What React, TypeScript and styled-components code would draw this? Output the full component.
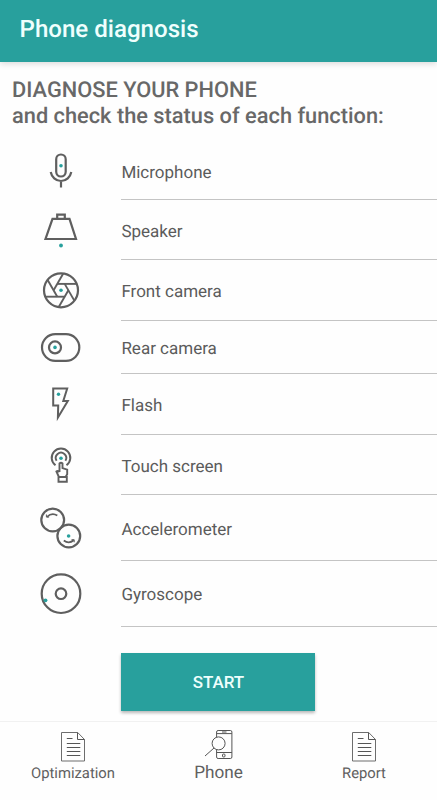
import React from "react";
import styled, { createGlobalStyle } from "styled-components";

const GlobalStyle = createGlobalStyle`
  * { box-sizing: border-box; }
  body {
    margin: 0;
    background: #fff;
    font-family: Roboto, sans-serif;
    text-rendering: geometricPrecision;
  }
`;

const TEAL = "#28a09d";
const INK = "#5f5f5f";

const Screen = styled.div`
  display: flex;
  flex-direction: column;
  width: 437px;
  height: 800px;
  overflow: hidden;
  background: #fefefe;
`;

const AppBar = styled.header`
  flex: none;
  height: 62px;
  padding: 15px 19.5px 0;
  background: ${TEAL};
  color: #effffd;
  box-shadow: 0 2px 6px rgba(0, 0, 0, 0.14);
  font-size: 24.1px;
  font-weight: 500;
  line-height: 28px;
  white-space: nowrap;
`;

const Heading = styled.h1`
  flex: none;
  height: 78px;
  margin: 0;
  padding: 16px 12px 0;
  color: #686868;
  font-size: 21.8px;
  font-weight: 500;
  line-height: 26px;
  white-space: nowrap;
`;

const HeadingLine = styled.span`
  display: block;
`;

const TestList = styled.ul`
  flex: none;
  margin: 0;
  padding: 0;
  list-style: none;
`;

const TestRow = styled.li<{ $height: number }>`
  display: flex;
  height: ${(p) => p.$height}px;
`;

const IconCell = styled.div`
  flex: none;
  width: 121px;
  padding-left: 30px;
`;

const TestIcon = styled.svg`
  display: block;
  fill: none;
  stroke: ${INK};
  stroke-width: 2.2;
  overflow: visible;
`;

const Dot = styled.circle`
  fill: ${TEAL};
  stroke: none;
`;

const TestLabel = styled.div<{ $top: number }>`
  flex: 1;
  padding: ${(p) => p.$top}px 0 0 0.4px;
  border-bottom: 1px solid #c4c4c4;
  color: #5b5b5b;
  font-size: 17px;
  line-height: 20px;
`;

const StartButton = styled.button`
  flex: none;
  width: 194px;
  height: 58px;
  margin: 26px 0 0 121.4px;
  padding: 0;
  border: 0;
  background: ${TEAL};
  box-shadow: 0 2px 3px rgba(0, 0, 0, 0.28);
  color: #effffd;
  font: 500 17px/58px Roboto, sans-serif;
  letter-spacing: -0.1px;
`;

const TabBar = styled.nav`
  display: grid;
  flex: none;
  grid-template-columns: 146px 145px 146px;
  height: 79px;
  margin-top: auto;
  border-top: 1px solid #f1f1f1;
`;

const Tab = styled.a`
  display: flex;
  flex-direction: column;
  align-items: center;
  color: #606060;
`;

const TabIcon = styled.svg`
  display: block;
  height: 41px;
  fill: none;
  stroke: #555;
  stroke-width: 1;
`;

const TabLabel = styled.span<{ $active?: boolean }>`
  font-size: ${(p) => (p.$active ? 17.2 : 14.8)}px;
  line-height: 20px;
`;

const Microphone = () => (
  <>
    <rect x="26.2" y="9.5" width="9.5" height="22" rx="4.75" />
    <path d="M20.7 27c1 5 5 9 10.3 9s9.300-4 10.300-9M31 36v6.500" />
    <Dot cx="31" cy="20.700" r="1.800" />
  </>
);

const Speaker = () => (
  <>
    <path d="M22.500 13.800h17L46 34H15.500z" />
    <path d="M27.200 13.800V9.700h7.600v4.100" />
    <Dot cx="31" cy="40.500" r="1.900" />
  </>
);

const Aperture = () => (
  <>
    <circle cx="31" cy="25.300" r="17" />
    {[0, 60, 120, 180, 240, 300].map((angle) => (
      <path
        key={angle}
        d="M27.3 18.900H46.600"
        transform={`rotate(${angle} 31 25.300)`}
        strokeWidth="1.900"
      />
    ))}
    <Dot cx="31" cy="25.300" r="1.800" />
  </>
);

const CameraLens = () => (
  <>
    <rect x="12" y="9.200" width="37.300" height="26.600" rx="13.300" />
    <circle cx="25" cy="22.400" r="6" />
    <Dot cx="25" cy="22.400" r="1.800" />
  </>
);

const Flash = () => (
  <>
    <path d="M23.200 8.500h14L33.300 21H37.800L27.900 37.500 28.200 25.500H23.200z" strokeWidth="2" />
    <Dot cx="28.500" cy="14.200" r="1.700" />
  </>
);

const Touch = () => (
  <>
    <path d="M25.500 25.300a9.300 9.300 0 1 1 11 0" strokeWidth="2" />
    <path d="M26.600 20.700a5.200 5.200 0 1 1 8.800 0" strokeWidth="1.900" />
    <path
      d="M29.500 32v-8.500q1.500-1.600 3 0v4.600l4.700 1.500v4.700l-1.700 2.700h-6.600l-2.500-5.500q1.200-1.200 3.100.5M28.500 37h8.300v4.700h-8.300z"
      strokeWidth="1.900"
    />
    <Dot cx="31" cy="18.200" r="1.800" />
  </>
);

const Accelerometer = () => (
  <>
    <circle cx="22.700" cy="20" r="11.400" />
    <circle cx="38.800" cy="36" r="11.400" />
    <path d="M17 16.800q5-4.600 10.300-1.200M33.800 40.500q5 3.800 10-.2" strokeWidth="1.800" />
    <path d="M16.400 14.500v2.600h2.700M44.200 42.300v-2.600h-2.700" strokeWidth="1" />
    <Dot cx="38.600" cy="36" r="1.800" />
  </>
);

const Gyroscope = () => (
  <>
    <circle cx="31" cy="28.700" r="19.300" />
    <circle cx="31" cy="28.700" r="5.300" />
    <Dot cx="15.500" cy="35.300" r="1.900" />
  </>
);

const tests = [
  { name: "Microphone", height: 60, label: 23, shift: 5, Icon: Microphone },
  { name: "Speaker", height: 60, label: 22, shift: 5, Icon: Speaker },
  { name: "Front camera", height: 61, label: 22, shift: 5, Icon: Aperture },
  { name: "Rear camera", height: 53, label: 18, shift: 4, Icon: CameraLens },
  { name: "Flash", height: 61, label: 22, shift: 6, Icon: Flash },
  { name: "Touch screen", height: 60, label: 22, shift: 5, Icon: Touch },
  { name: "Accelerometer", height: 66, label: 25, shift: 5, Icon: Accelerometer },
  { name: "Gyroscope", height: 66, label: 24, shift: 4, Icon: Gyroscope },
];

const DocumentIcon = () => (
  <TabIcon width="24" viewBox="0 0 24 41">
    <path d="M.5 10.500h16.200L23.500 17.500v21.500H.5z" stroke="#6d6d6d" />
    <path d="M16.500 10.500v7h7" />
    <path d="M5.800 16.500h5.700" />
    <path d="M5.800 21.500h13.500M5.800 25.500h13.500M5.800 29.500h13.500M5.800 33.500h13.500" />
  </TabIcon>
);

const PhoneScanIcon = () => (
  <TabIcon width="30" viewBox="0 0 30 41">
    <rect x="12.600" y="8.500" width="15.300" height="28" rx="1.500" />
    <path d="M12.600 11.600h15.300M12.600 30.500h15.300M18 10h4.500" />
    <rect x="18.500" y="32" width="2.500" height="3" rx="1" />
    <circle cx="14.600" cy="21.400" r="6.500" fill="#fefefe" />
    <path d="M10 26L1 34" />
  </TabIcon>
);

export default function App() {
  return (
    <Screen>
      <GlobalStyle />
      <AppBar>Phone diagnosis</AppBar>
      <Heading>
        <HeadingLine>DIAGNOSE YOUR PHONE</HeadingLine>
        <HeadingLine>and check the status of each function:</HeadingLine>
      </Heading>
      <TestList>
        {tests.map(({ name, height, label, shift, Icon }) => (
          <TestRow key={name} $height={height}>
            <IconCell>
              <TestIcon width="65" height={height} viewBox={`0 ${-shift} 65 ${height}`}>
                <Icon />
              </TestIcon>
            </IconCell>
            <TestLabel $top={label}>{name}</TestLabel>
          </TestRow>
        ))}
      </TestList>
      <StartButton>START</StartButton>
      <TabBar>
        <Tab>
          <DocumentIcon />
          <TabLabel>Optimization</TabLabel>
        </Tab>
        <Tab>
          <PhoneScanIcon />
          <TabLabel $active>Phone</TabLabel>
        </Tab>
        <Tab>
          <DocumentIcon />
          <TabLabel>Report</TabLabel>
        </Tab>
      </TabBar>
    </Screen>
  );
}
